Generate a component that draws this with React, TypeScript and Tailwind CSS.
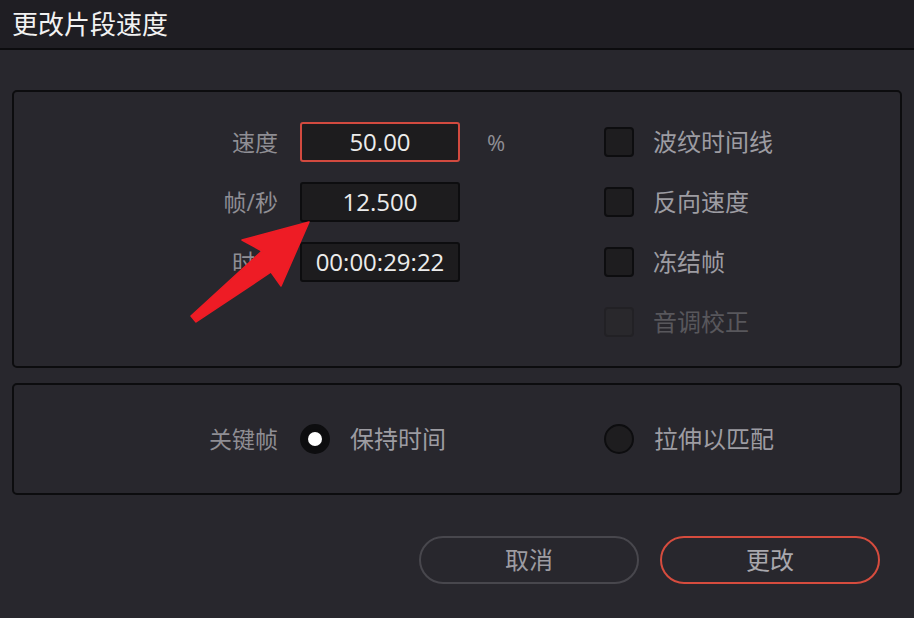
import React from "react";

const font = { fontFamily: '"Open Sans", "Noto Sans CJK SC", sans-serif' };

function Field({ label, value, active }: { label: string; value: string; active?: boolean }) {
  return (
    <div className="flex h-10 items-center">
      <div className="w-[286px] pr-[22px] text-right text-[23px] text-[#8f8e94]">{label}</div>
      <div
        className={
          "flex h-10 w-[160px] items-center justify-center rounded-[3px] border-2 bg-[#1d1c1e] text-[24px] text-[#ececec] " +
          (active ? "border-[#d24a3f]" : "border-[#0d0d0f]")
        }
      >
        {value}
      </div>
    </div>
  );
}

function Check({ label, disabled }: { label: string; disabled?: boolean }) {
  return (
    <div className="flex h-10 items-center">
      <div
        className={
          "h-[30px] w-[30px] rounded-[4px] border-2 " +
          (disabled ? "border-[#222125] bg-[#29282c]" : "border-[#0d0d0f] bg-[#1e1d1f]")
        }
      />
      <div className={"ml-[19px] text-[24px] " + (disabled ? "text-[#58575c]" : "text-[#9d9ca2]")}>{label}</div>
    </div>
  );
}

export default function App() {
  return (
    <div className="relative h-[618px] w-[914px] overflow-hidden bg-[#28272d]" style={font}>
      <div className="flex h-[50px] items-center border-b-2 border-[#0c0c0e] bg-[#1f1e23] pl-[12px] text-[26px] text-[#f2f2f2]">
        更改片段速度
      </div>

      <div className="mx-[12px] mt-[40px] flex h-[278px] rounded-[5px] border-2 border-[#0c0c0e] pt-[30px]">
        <div className="flex w-[590px] flex-col gap-5">
          <div className="flex items-center">
            <Field label="速度" value="50.00" active />
            <div className="ml-[27px] text-[22px] text-[#8f8e94]">%</div>
          </div>
          <Field label="帧/秒" value="12.500" />
          <Field label="时长" value="00:00:29:22" />
        </div>
        <div className="flex flex-col gap-5">
          <Check label="波纹时间线" />
          <Check label="反向速度" />
          <Check label="冻结帧" />
          <Check label="音调校正" disabled />
        </div>
      </div>

      <div className="mx-[12px] mt-[15px] flex h-[112px] items-center rounded-[5px] border-2 border-[#0c0c0e]">
        <div className="w-[286px] pr-[22px] text-right text-[23px] text-[#8f8e94]">关键帧</div>
        <div className="flex h-[30px] w-[30px] items-center justify-center rounded-full border-[5px] border-[#0d0d0f] bg-[#0d0d0f]">
          <div className="h-[14px] w-[14px] rounded-full bg-white" />
        </div>
        <div className="ml-[20px] w-[254px] text-[24px] text-[#9d9ca2]">保持时间</div>
        <div className="h-[30px] w-[30px] rounded-full border-2 border-[#0d0d0f] bg-[#1e1d1f]" />
        <div className="ml-[20px] text-[24px] text-[#9d9ca2]">拉伸以匹配</div>
      </div>

      <div className="mt-[41px] flex justify-end gap-[21px] pr-[34px]">
        <button className="flex h-[48px] w-[220px] items-center justify-center rounded-full border-2 border-[#48474d] text-[24px] text-[#9d9ca2]">
          取消
        </button>
        <button className="flex h-[48px] w-[220px] items-center justify-center rounded-full border-2 border-[#d64c3e] text-[24px] text-[#a9a8ad]">
          更改
        </button>
      </div>

      <svg className="pointer-events-none absolute left-0 top-0" width="914" height="618">
        <polygon
          points="309,222 242,240 262,251 191,316 196,322 271,272 281,286"
          fill="#ee1c25"
          stroke="#ee1c25"
          strokeWidth="1.5"
          strokeLinejoin="round"
        />
      </svg>
    </div>
  );
}
